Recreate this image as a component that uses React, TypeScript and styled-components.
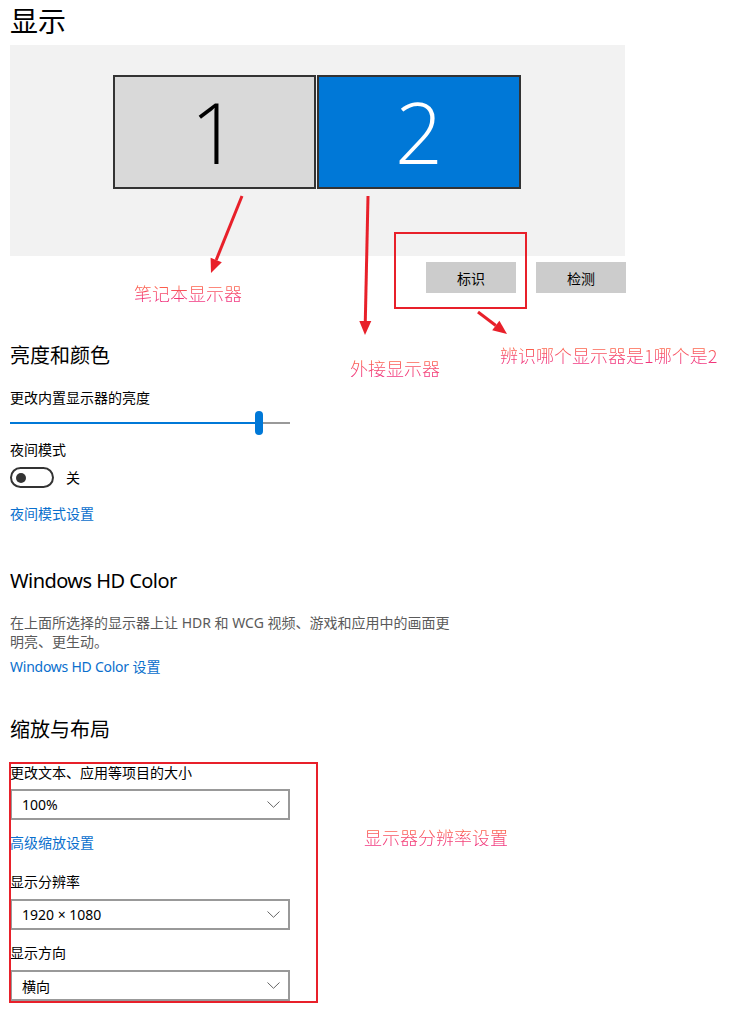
import React from "react";
import styled, { createGlobalStyle } from "styled-components";

const GlobalStyle = createGlobalStyle`
  html, body { margin: 0; padding: 0; background: #fff; }
  body {
    font-family: "Noto Sans", "Noto Sans CJK SC", sans-serif;
    color: #000;
  }
`;

const Page = styled.div`
  position: relative;
  width: 731px;
  min-height: 1014px;
  padding-left: 10px;
  box-sizing: border-box;
  display: flex;
  flex-direction: column;
  align-items: flex-start;
  overflow: hidden;
`;

const PageTitle = styled.h1`
  margin: 0 0 3px;
  font-size: 28px;
  font-weight: 400;
  line-height: 42px;
`;

const Arrangement = styled.div`
  width: 615px;
  height: 211px;
  background: #f2f2f2;
  box-sizing: border-box;
  display: flex;
  align-items: flex-start;
  gap: 1px;
  padding: 30px 0 0 103px;
`;

const Monitor = styled.div<{ $active?: boolean; $w: number }>`
  width: ${(p) => p.$w}px;
  height: 114px;
  box-sizing: border-box;
  border: 2px solid #333;
  background: ${(p) => (p.$active ? "#0078d7" : "#d9d9d9")};
  color: ${(p) => (p.$active ? "#fff" : "#000")};
  display: flex;
  align-items: center;
  justify-content: center;
  font-family: "Open Sans", sans-serif;
  font-weight: 300;
  font-size: 84px;
  line-height: 1;
`;

const ButtonRow = styled.div`
  width: 616px;
  display: flex;
  justify-content: flex-end;
  gap: 20px;
  margin-top: 6px;
`;

const GreyButton = styled.button`
  width: 90px;
  height: 31px;
  border: none;
  padding: 0;
  background: #cccccc;
  color: #000;
  font-family: "Noto Sans CJK SC", sans-serif;
  font-size: 14px;
`;

const SectionHeading = styled.h2<{ $top: number; $tight?: boolean }>`
  margin: ${(p) => p.$top}px 0 0;
  font-size: 20px;
  font-weight: 400;
  line-height: 28px;
  letter-spacing: ${(p) => (p.$tight ? "-0.55px" : "0")};
  color: #000;
`;

const Label = styled.div<{ $top: number }>`
  margin-top: ${(p) => p.$top}px;
  font-size: 14px;
  line-height: 20px;
`;

const Link = styled.a<{ $top: number }>`
  margin-top: ${(p) => p.$top}px;
  font-size: 14px;
  line-height: 20px;
  color: #0a6fcd;
  text-decoration: none;
`;

const LatinPart = styled.span`
  letter-spacing: -0.25px;
`;

const Paragraph = styled.p<{ $top: number }>`
  margin: ${(p) => p.$top}px 0 0;
  width: 445px;
  font-size: 14px;
  line-height: 19px;
  color: #5a5a5a;
`;

const Slider = styled.div`
  position: relative;
  margin-top: 3px;
  width: 280px;
  height: 24px;
  display: flex;
  align-items: center;
`;

const Track = styled.div`
  width: 100%;
  height: 2px;
  background: #999;
`;

const TrackFill = styled.div`
  height: 100%;
  background: #0078d7;
`;

const Thumb = styled.div`
  position: absolute;
  top: 0;
  width: 8px;
  height: 24px;
  border-radius: 4px;
  background: #0078d7;
`;

const ToggleRow = styled.div`
  margin-top: 7px;
  display: flex;
  align-items: center;
  gap: 12px;
  font-size: 14px;
  line-height: 20px;
`;

const ToggleTrack = styled.div`
  width: 44px;
  height: 21px;
  box-sizing: border-box;
  border: 2px solid #333;
  border-radius: 11px;
  display: flex;
  align-items: center;
  padding-left: 4px;
`;

const ToggleKnob = styled.div`
  width: 10px;
  height: 10px;
  border-radius: 50%;
  background: #333;
`;

const Select = styled.div<{ $top: number }>`
  margin-top: ${(p) => p.$top}px;
  width: 280px;
  height: 31px;
  box-sizing: border-box;
  border: 2px solid #999;
  display: flex;
  align-items: center;
  justify-content: space-between;
  padding: 0 8px 0 10px;
  font-size: 14px;
  color: #000;
`;

const Overlay = styled.svg`
  position: absolute;
  left: 0;
  top: 0;
  pointer-events: none;
`;

const Note = styled.span<{ $x: number; $y: number }>`
  position: absolute;
  left: ${(p) => p.$x}px;
  top: ${(p) => p.$y}px;
  font-family: "Noto Sans CJK SC", serif;
  font-weight: 300;
  font-size: 18px;
  line-height: 18px;
  white-space: nowrap;
  background: linear-gradient(180deg, #ff6a3c 0%, #f5456a 55%, #f0307e 100%);
  -webkit-background-clip: text;
  background-clip: text;
  color: transparent;
`;

const Chevron = () => (
  <svg width="13" height="7" viewBox="0 0 13 7">
    <polyline points="0.5,0.5 6.5,6.3 12.5,0.5" fill="none" stroke="#666" strokeWidth="1" />
  </svg>
);

const Dropdown = ({ value, top }: { value: string; top: number }) => (
  <Select $top={top}>
    <span>{value}</span>
    <Chevron />
  </Select>
);

const brightness = 245 / 280;
const RED = "#e8202a";

export default function App() {
  return (
    <>
      <GlobalStyle />
      <Page>
        <PageTitle>显示</PageTitle>
        <Arrangement>
          <Monitor $w={203}>1</Monitor>
          <Monitor $w={204} $active>
            2
          </Monitor>
        </Arrangement>
        <ButtonRow>
          <GreyButton>标识</GreyButton>
          <GreyButton>检测</GreyButton>
        </ButtonRow>

        <SectionHeading $top={49}>亮度和颜色</SectionHeading>
        <Label $top={18}>更改内置显示器的亮度</Label>
        <Slider>
          <Track>
            <TrackFill style={{ width: `${brightness * 100}%` }} />
          </Track>
          <Thumb style={{ left: `${brightness * 280}px` }} />
        </Slider>
        <Label $top={5}>夜间模式</Label>
        <ToggleRow>
          <ToggleTrack>
            <ToggleKnob />
          </ToggleTrack>
          <span>关</span>
        </ToggleRow>
        <Link $top={16}>夜间模式设置</Link>

        <SectionHeading $top={43} $tight>
          Windows HD Color
        </SectionHeading>
        <Paragraph $top={18}>
          在上面所选择的显示器上让 HDR 和 WCG 视频、游戏和应用中的画面更明亮、更生动。
        </Paragraph>
        <Link $top={6}>
          <LatinPart>Windows HD Color</LatinPart> 设置
        </Link>

        <SectionHeading $top={39}>缩放与布局</SectionHeading>
        <Label $top={19}>更改文本、应用等项目的大小</Label>
        <Dropdown value="100%" top={6} />
        <Link $top={13}>高级缩放设置</Link>
        <Label $top={19}>显示分辨率</Label>
        <Dropdown value="1920 × 1080" top={7} />
        <Label $top={13}>显示方向</Label>
        <Dropdown value="横向" top={7} />

        <Overlay width="731" height="1014" viewBox="0 0 731 1014">
          <g stroke={RED} strokeWidth="3" fill="none">
            <line x1="242" y1="196" x2="216.2" y2="260" />
            <line x1="368" y1="196" x2="365.3" y2="321" />
            <line x1="478" y1="312" x2="495.8" y2="325.5" />
          </g>
          <g fill={RED}>
            <polygon points="211,273 221.8,262.2 210.6,257.8" />
            <polygon points="365,335 371.3,321.1 359.3,320.9" />
            <polygon points="507,334 492.2,330.3 499.4,320.7" />
          </g>
          <g stroke={RED} strokeWidth="2" fill="none">
            <rect x="395" y="233" width="131" height="75" />
            <rect x="10" y="763" width="307" height="239" />
          </g>
        </Overlay>
        <Note $x={134} $y={284}>笔记本显示器</Note>
        <Note $x={350} $y={359}>外接显示器</Note>
        <Note $x={500} $y={346}>辨识哪个显示器是1哪个是2</Note>
        <Note $x={364} $y={828}>显示器分辨率设置</Note>
      </Page>
    </>
  );
}
